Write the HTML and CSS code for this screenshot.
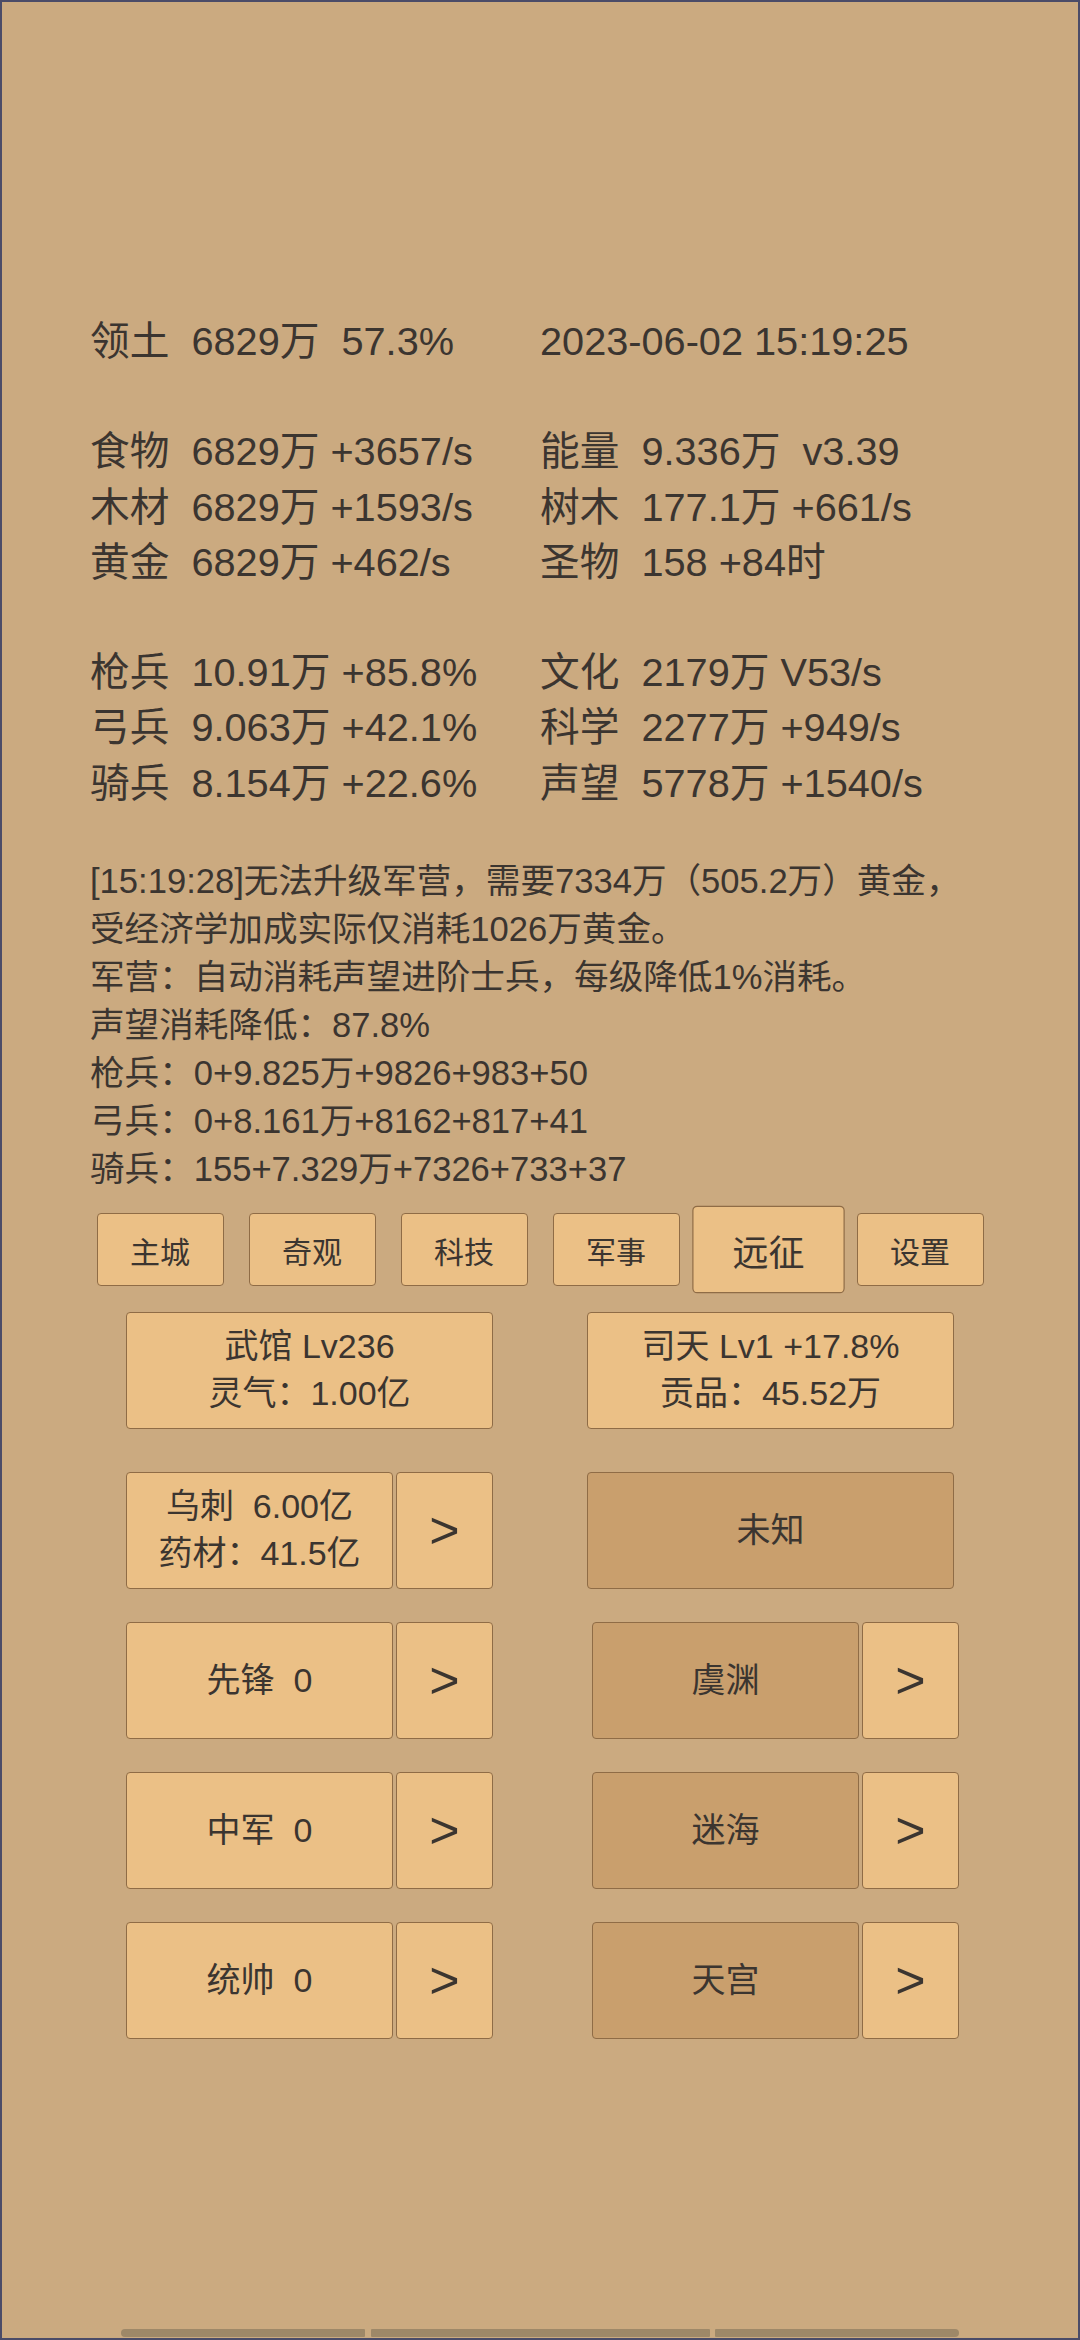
FILE: index.html
```html
<!DOCTYPE html>
<html lang="zh-CN">
<head>
<meta charset="utf-8">
<title>Game</title>
<link rel="stylesheet" href="styles.css">
</head>
<body>
<div class="screen">
  <section class="stats">
    <div class="row"><span>领土  6829万  57.3%</span><span>2023-06-02 15:19:25</span></div>
    <div class="blank"></div>
    <div class="row"><span>食物  6829万 +3657/s</span><span>能量  9.336万  v3.39</span></div>
    <div class="row"><span>木材  6829万 +1593/s</span><span>树木  177.1万 +661/s</span></div>
    <div class="row"><span>黄金  6829万 +462/s</span><span>圣物  158 +84时</span></div>
    <div class="blank"></div>
    <div class="row"><span>枪兵  10.91万 +85.8%</span><span>文化  2179万 V53/s</span></div>
    <div class="row"><span>弓兵  9.063万 +42.1%</span><span>科学  2277万 +949/s</span></div>
    <div class="row"><span>骑兵  8.154万 +22.6%</span><span>声望  5778万 +1540/s</span></div>
  </section>

  <section class="log">
    <div class="line">[15:19:28]无法升级军营，需要7334万（505.2万）黄金，</div>
    <div class="line">受经济学加成实际仅消耗1026万黄金。</div>
    <div class="line">军营：自动消耗声望进阶士兵，每级降低1%消耗。</div>
    <div class="line">声望消耗降低：87.8%</div>
    <div class="line">枪兵：0+9.825万+9826+983+50</div>
    <div class="line">弓兵：0+8.161万+8162+817+41</div>
    <div class="line">骑兵：155+7.329万+7326+733+37</div>
  </section>

  <nav class="nav">
    <div class="tab">主城</div>
    <div class="tab">奇观</div>
    <div class="tab">科技</div>
    <div class="tab">军事</div>
    <div class="tab active">远征</div>
    <div class="tab">设置</div>
  </nav>

  <section class="panel">
    <div class="cell first"><div class="card full"><div class="txt">武馆 Lv236</div><div class="txt">灵气：1.00亿</div></div></div>
    <div class="cell first"><div class="card full"><div class="txt">司天 Lv1 +17.8%</div><div class="txt">贡品：45.52万</div></div></div>

    <div class="cell"><div class="card main"><div class="txt">乌刺  6.00亿</div><div class="txt">药材：41.5亿</div></div><div class="card arrow">&gt;</div></div>
    <div class="cell"><div class="card full dark">未知</div></div>

    <div class="cell"><div class="card main"><div class="txt">先锋  0</div></div><div class="card arrow">&gt;</div></div>
    <div class="cell shift"><div class="card main dark">虞渊</div><div class="card arrow">&gt;</div></div>

    <div class="cell"><div class="card main"><div class="txt">中军  0</div></div><div class="card arrow">&gt;</div></div>
    <div class="cell shift"><div class="card main dark">迷海</div><div class="card arrow">&gt;</div></div>

    <div class="cell"><div class="card main"><div class="txt">统帅  0</div></div><div class="card arrow">&gt;</div></div>
    <div class="cell shift"><div class="card main dark">天宫</div><div class="card arrow">&gt;</div></div>
  </section>

  <div class="scrollbar">
    <div class="seg seg-a"></div>
    <div class="seg seg-b"></div>
    <div class="seg seg-c"></div>
  </div>
</div>
</body>
</html>
```

FILE: styles.css
```css
html, body {
  margin: 0;
  padding: 0;
  background: #cbaa80;
}

.screen {
  width: 1080px;
  height: 2340px;
  box-sizing: border-box;
  border: 2px solid #4b4c68;
  background: #cbaa80;
  color: #3b3530;
  font-family: "Liberation Sans", "Noto Sans CJK SC", sans-serif;
  display: flex;
  flex-direction: column;
  overflow: hidden;
}

.stats {
  padding: 312px 0 0 88px;
  font-size: 39.7px;
  line-height: 55.2px;
}

.row {
  display: grid;
  grid-template-columns: 450px auto;
  height: 55.2px;
}

.row span {
  white-space: pre;
}

.blank {
  height: 55.2px;
}

.log {
  margin-top: 46px;
  padding-left: 88px;
  font-size: 34.6px;
  line-height: 48px;
}

.line {
  white-space: pre;
}

.nav {
  margin-top: 20.5px;
  display: flex;
  justify-content: center;
  gap: 25px;
}

.tab {
  width: 127px;
  height: 73px;
  box-sizing: border-box;
  border: 1.5px solid #8f6c46;
  border-radius: 4px;
  background: #ebc086;
  display: flex;
  align-items: center;
  justify-content: center;
  font-size: 30px;
}

.tab.active {
  transform: scale(1.2);
}

.panel {
  margin-top: 25.5px;
  display: grid;
  grid-template-columns: 367px 367px;
  column-gap: 94px;
  row-gap: 33px;
  justify-content: center;
}

.cell {
  display: flex;
  gap: 3px;
  height: 117px;
}

.cell.first {
  margin-bottom: 10px;
}

.cell.shift {
  margin-left: 5px;
  margin-right: -5px;
}

.card {
  box-sizing: border-box;
  border: 1.5px solid #8f6c46;
  border-radius: 4px;
  background: #ebc086;
  display: flex;
  flex-direction: column;
  align-items: center;
  justify-content: center;
  font-size: 34px;
  line-height: 47px;
}

.txt {
  white-space: pre;
}

.card.full {
  flex: 1;
}

.card.main {
  width: 267px;
}

.card.arrow {
  width: 97px;
  font-size: 52px;
}

.card.dark {
  background: #c99f6d;
}

.scrollbar {
  margin-top: auto;
  margin-bottom: 1px;
  padding-left: 118.5px;
  display: flex;
  gap: 5.5px;
  height: 8px;
}

.seg {
  height: 8px;
  background: #9e8868;
}

.seg-a {
  width: 244.5px;
  border-radius: 4px 1px 1px 4px;
}

.seg-b {
  width: 339px;
  border-radius: 1px;
}

.seg-c {
  width: 244px;
  border-radius: 1px 4px 4px 1px;
}
```
